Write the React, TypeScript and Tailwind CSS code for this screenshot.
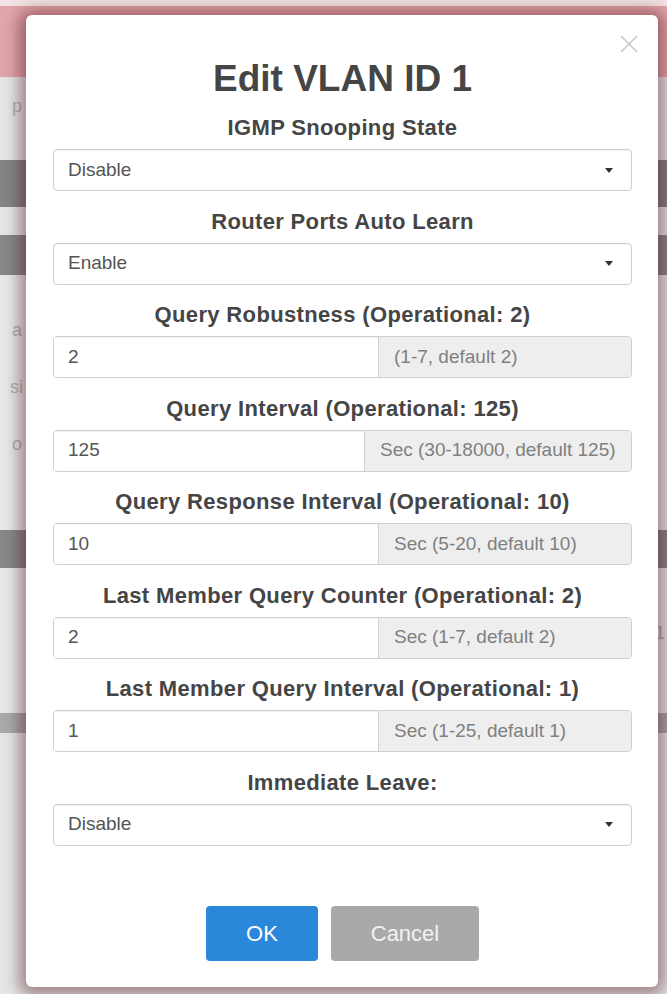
import React from "react";

const font = { fontFamily: '"Liberation Sans", Arial, sans-serif' };

function Label({ children }: { children: React.ReactNode }) {
  return (
    <div className="h-[26px] leading-[26px] text-center text-[22px] font-bold text-[#454545] tracking-[0.35px] whitespace-nowrap">
      {children}
    </div>
  );
}

function Caret() {
  return (
    <svg width="8" height="5" viewBox="0 0 8 5" className="shrink-0">
      <path d="M0 0 L8 0 L4 5 Z" fill="#333" />
    </svg>
  );
}

function SelectBox({ value }: { value: string }) {
  return (
    <div className="mt-[8px] h-[42px] flex items-center justify-between rounded-[4px] border border-[#cfcfcf] bg-white pl-[14px] pr-[18px] shadow-[inset_0_1px_1px_rgba(0,0,0,0.06)]">
      <span className="text-[19px] text-[#555]">{value}</span>
      <Caret />
    </div>
  );
}

function InputGroup({ value, addon, addonW }: { value: string; addon: string; addonW: string }) {
  return (
    <div className="mt-[8px] h-[42px] flex rounded-[4px] border border-[#cfcfcf] overflow-hidden">
      <div className="flex-1 flex items-center pl-[14px] bg-white text-[19px] text-[#555] shadow-[inset_0_1px_1px_rgba(0,0,0,0.06)]">
        {value}
      </div>
      <div
        className={`${addonW} flex items-center pl-[15px] bg-[#eeeeee] border-l border-[#cfcfcf] text-[19px] text-[#808080] whitespace-nowrap`}
      >
        {addon}
      </div>
    </div>
  );
}

function Field({ label, children, first }: { label: string; children: React.ReactNode; first?: boolean }) {
  return (
    <div className={first ? "mt-[14px]" : "mt-[17.5px]"}>
      <Label>{label}</Label>
      {children}
    </div>
  );
}

function BgText({ children, cls }: { children: React.ReactNode; cls: string }) {
  return <div className={`text-[18px] text-[#b0b0b0] ${cls}`}>{children}</div>;
}

export default function App() {
  return (
    <div className="relative w-[667px] h-[994px] overflow-hidden bg-[#e6e6e6]" style={font}>
      {/* dimmed page behind the dialog */}
      <div className="flex flex-col">
        <div className="h-[6px] bg-[#f3e3e4]" />
        <div className="h-[71px] bg-[#e2a5ab]" />
        <div className="h-[83px] bg-[#e6e6e6] pt-[16px]">
          <BgText cls="pl-[12px]">p</BgText>
        </div>
        <div className="h-[47px] bg-[#858585]" />
        <div className="h-[28px] bg-[#e6e6e6]" />
        <div className="h-[40px] bg-[#888888]" />
        <div className="h-[255px] bg-[#e8e8e8] pt-[42px] flex flex-col gap-[30px]">
          <BgText cls="pl-[12px]">a</BgText>
          <BgText cls="pl-[10px]">si</BgText>
          <BgText cls="pl-[12px]">o</BgText>
        </div>
        <div className="h-[38px] bg-[#888888]" />
        <div className="h-[145px] bg-[#e8e8e8] flex justify-end pr-[2px] pt-[52px]">
          <BgText cls="">1</BgText>
        </div>
        <div className="h-[20px] bg-[#aaaaaa]" />
        <div className="flex-1 bg-[#e8e8e8]" />
      </div>

      {/* dialog */}
      <div className="absolute left-[26px] top-[15px] w-[632px] rounded-[6px] bg-white shadow-[0_2px_16px_7px_rgba(60,0,10,0.42)] px-[27px] pr-[26px] pt-[42px] pb-[26px]">
        <button className="absolute right-[20px] top-[20px] w-[18px] h-[18px]" aria-label="close">
          <svg width="18" height="18" viewBox="0 0 18 18">
            <path d="M1 1 L17 17 M17 1 L1 17" stroke="#c8c8c8" strokeWidth="1.6" />
          </svg>
        </button>
        <div className="h-[44px] leading-[44px] text-center text-[37px] font-bold text-[#454545]">Edit VLAN ID 1</div>

        <Field label="IGMP Snooping State" first>
          <SelectBox value="Disable" />
        </Field>
        <Field label="Router Ports Auto Learn">
          <SelectBox value="Enable" />
        </Field>
        <Field label="Query Robustness (Operational: 2)">
          <InputGroup value="2" addon="(1-7, default 2)" addonW="w-[253px]" />
        </Field>
        <Field label="Query Interval (Operational: 125)">
          <InputGroup value="125" addon="Sec (30-18000, default 125)" addonW="w-[267px]" />
        </Field>
        <Field label="Query Response Interval (Operational: 10)">
          <InputGroup value="10" addon="Sec (5-20, default 10)" addonW="w-[253px]" />
        </Field>
        <Field label="Last Member Query Counter (Operational: 2)">
          <InputGroup value="2" addon="Sec (1-7, default 2)" addonW="w-[253px]" />
        </Field>
        <Field label="Last Member Query Interval (Operational: 1)">
          <InputGroup value="1" addon="Sec (1-25, default 1)" addonW="w-[253px]" />
        </Field>
        <Field label="Immediate Leave:">
          <SelectBox value="Disable" />
        </Field>

        <div className="mt-[60px] flex justify-center gap-[13px]">
          <button className="w-[112px] h-[55px] rounded-[4px] bg-[#2b87da] text-white text-[22px]">OK</button>
          <button className="w-[148px] h-[55px] rounded-[4px] bg-[#a9a9a9] text-[#f2f2f2] text-[22px]">Cancel</button>
        </div>
      </div>
    </div>
  );
}
